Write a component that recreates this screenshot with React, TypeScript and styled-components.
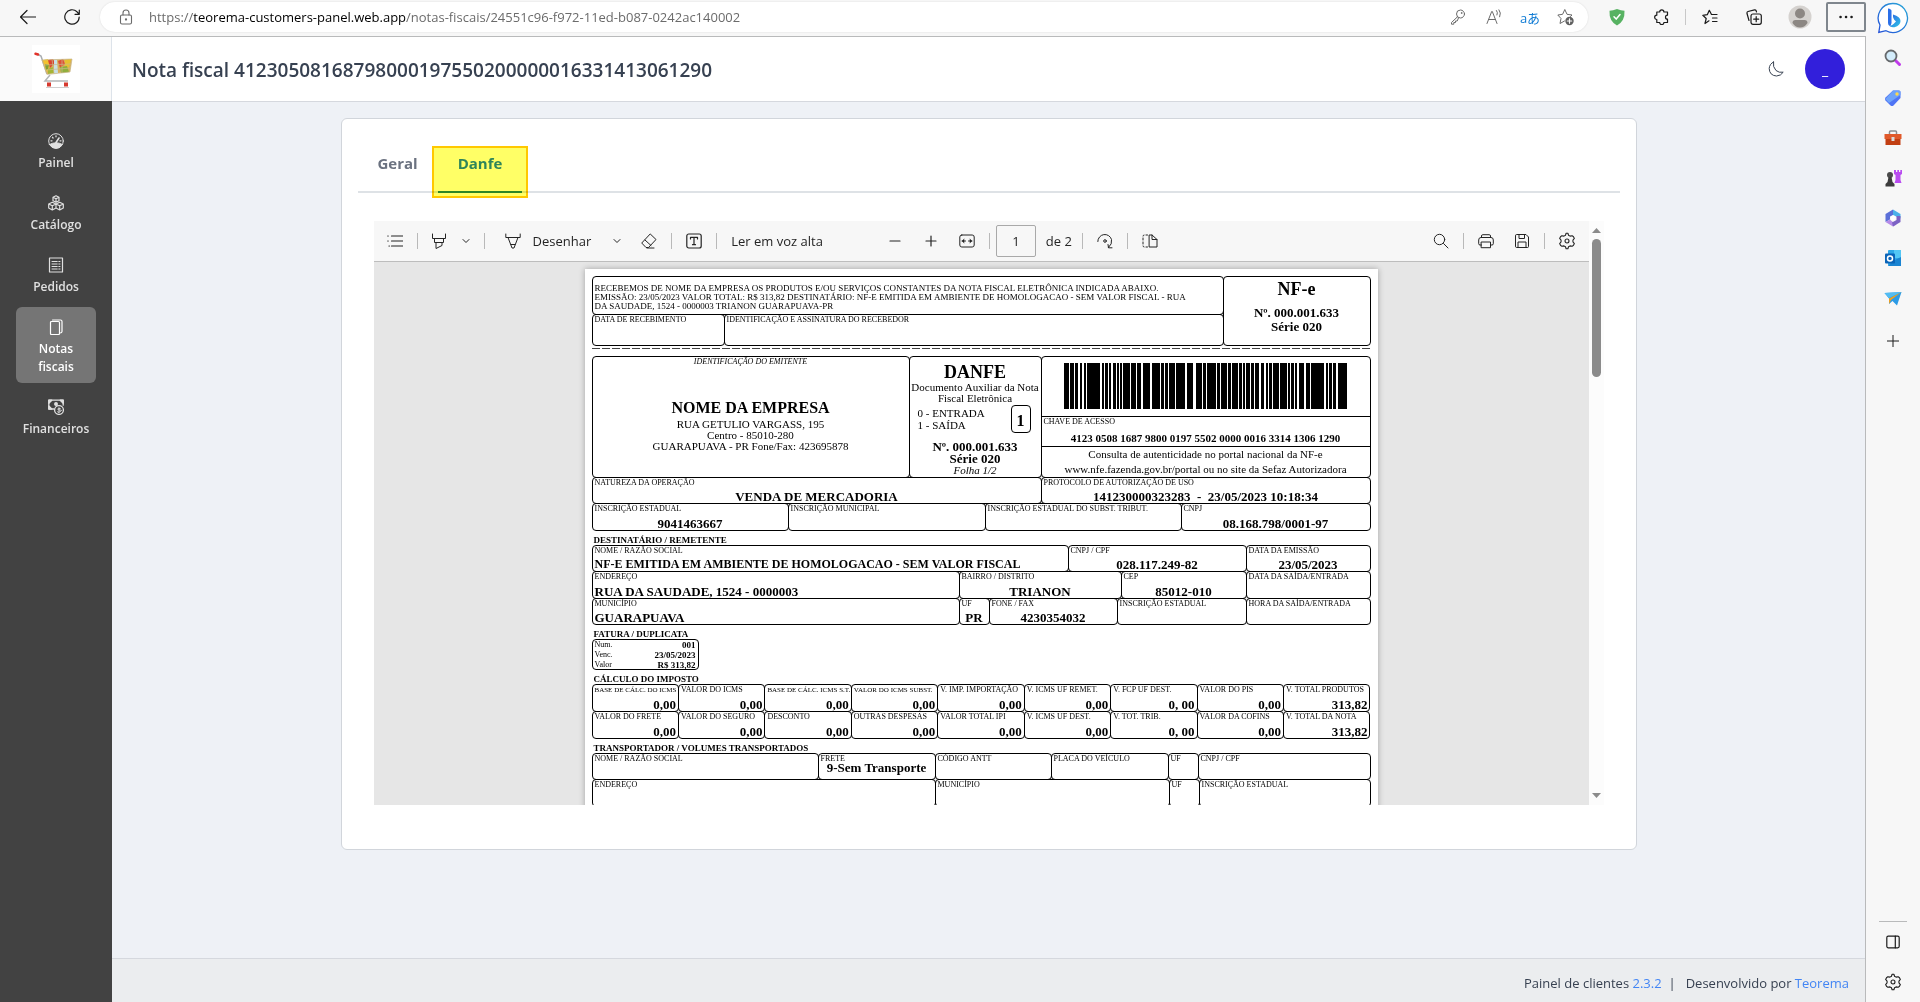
import React from 'react';
import styled, { createGlobalStyle, css } from 'styled-components';

const ui = `"Segoe UI", "Open Sans", "Noto Sans", sans-serif`;
const serif = `"Times New Roman", "Liberation Serif", serif`;

const GlobalStyle = createGlobalStyle`
  *, *::before, *::after { box-sizing: border-box; }
  body { margin: 0; font-family: ${ui}; color: #374151; }
  button { font: inherit; color: inherit; background: none; border: 0; padding: 0; cursor: pointer; }
  a { text-decoration: none; }
  svg { display: block; flex: none; }
`;

/* ---------- browser frame ---------- */

const Shell = styled.div`
  display: flex;
  height: 100vh;
  background: #f7f7f7;
`;

const Window = styled.div`
  flex: 1;
  min-width: 0;
  display: flex;
  flex-direction: column;
`;

const TopBar = styled.header`
  display: flex;
  align-items: center;
  gap: 4px;
  height: 36px;
  padding-left: 8px;
  padding-bottom: 2px;
  color: #1b1b1b;
`;

const BarButton = styled.button<{ $w?: number }>`
  display: flex;
  align-items: center;
  justify-content: center;
  width: ${(p) => p.$w ?? 40}px;
  height: 30px;
`;

const MenuButton = styled(BarButton)`
  border: 2px solid #7f868d;
  border-radius: 2px;
`;

const Address = styled.div`
  flex: 1;
  display: flex;
  align-items: center;
  height: 30px;
  margin: 0 5px 0 4px;
  padding: 0 4px 0 16px;
  border-radius: 15px;
  background: #fff;
  box-shadow: 0 0 2px rgba(0, 0, 0, 0.12);
  color: #6b6b6b;
`;

const Url = styled.span`
  flex: 1;
  margin-left: 13px;
  font-size: 13px;
  white-space: nowrap;
  b { font-weight: 400; color: #000; }
`;

const Translate = styled.span`
  font-family: "Open Sans", "Noto Sans CJK JP", sans-serif;
  font-size: 13px;
  color: #0f7bd4;
`;

const BarDivider = styled.span`
  width: 1px;
  height: 16px;
  background: #c8c8c8;
`;

const Viewport = styled.div`
  flex: 1;
  min-height: 0;
  display: flex;
  border-top: 1px solid #b9babb;
  border-right: 1px solid #b9babb;
`;

const EdgeRail = styled.aside`
  width: 54px;
  display: flex;
  flex-direction: column;
  align-items: center;
  color: #1b1b1b;
`;

const RailButton = styled.button<{ $h?: number }>`
  display: flex;
  align-items: center;
  justify-content: center;
  width: 40px;
  height: ${(p) => p.$h ?? 40}px;
`;

const BingButton = styled(RailButton)`
  margin-bottom: 2px;
`;

const RailSpace = styled.div`
  flex: 1;
  width: 28px;
  border-bottom: 1px solid #b9babb;
`;

/* ---------- application ---------- */

const SideNav = styled.nav`
  width: 112px;
  display: flex;
  flex-direction: column;
  background: #424242;
`;

const LogoBox = styled.div`
  display: flex;
  align-items: center;
  justify-content: center;
  height: 64px;
  background: #fafafa;
  border-right: 1px solid #dde3ea;
`;

const NavList = styled.ul`
  list-style: none;
  margin: 0;
  padding: 20px 16px;
  display: flex;
  flex-direction: column;
  gap: 4px;
`;

const NavItem = styled.a<{ $active?: boolean }>`
  display: flex;
  flex-direction: column;
  align-items: center;
  gap: 5px;
  padding: 12px 8px 7px;
  border-radius: 6px;
  font-size: 12px;
  font-weight: 600;
  line-height: 18px;
  text-align: center;
  color: #e0e0e0;
  ${(p) => p.$active && css`
    background: #757575;
    color: #fff;
  `}
`;

const Content = styled.div`
  flex: 1;
  min-width: 0;
  display: flex;
  flex-direction: column;
  background: #eef1f6;
`;

const Header = styled.div`
  display: flex;
  align-items: center;
  gap: 13px;
  height: 65px;
  padding: 0 20px;
  background: #fff;
  border-bottom: 1px solid #d5d8de;
`;

const Title = styled.h1`
  flex: 1;
  margin: 0;
  padding-top: 2px;
  font-size: 19px;
  line-height: 28px;
  font-weight: 600;
  color: #374151;
`;

const ThemeButton = styled.button`
  display: flex;
  align-items: center;
  justify-content: center;
  width: 32px;
  height: 32px;
`;

const Avatar = styled.button`
  width: 40px;
  height: 40px;
  border-radius: 50%;
  background: #321fdb;
  color: #fff;
  font-size: 14px;
`;

const Main = styled.main`
  flex: 1;
  min-height: 0;
  padding: 16px;
`;

const Card = styled.section`
  max-width: 1296px;
  margin: 0 auto;
  padding: 16px 16px 44px;
  background: #fff;
  border: 1px solid #d1d5db;
  border-radius: 6px;
`;

const Tabs = styled.div`
  display: flex;
  border-bottom: 2px solid #dee2e6;
`;

const Tab = styled.button<{ $active?: boolean }>`
  position: relative;
  padding: 16px 20px;
  margin-bottom: -2px;
  font-size: 15px;
  line-height: 24px;
  font-weight: 700;
  color: ${(p) => (p.$active ? '#2f855a' : '#6b7280')};
  border-bottom: 2px solid ${(p) => (p.$active ? '#2f855a' : 'transparent')};
`;

const TabText = styled.span`
  position: relative;
  z-index: 1;
`;

const Marker = styled.span`
  position: absolute;
  inset: 11px -6px -7px;
  border: 2px solid #ffc800;
  background: #ffff66;
  mix-blend-mode: multiply;
`;

const Footer = styled.footer`
  display: flex;
  align-items: center;
  justify-content: flex-end;
  height: 44px;
  padding: 4px 16px 0;
  border-top: 1px solid #d5d8de;
  background: #ebedef;
  font-size: 13px;
  white-space: pre;
  a { color: #4285f4; }
`;

/* ---------- pdf viewer ---------- */

const Viewer = styled.div`
  display: flex;
  height: 584px;
  margin: 28px 16px 0;
  overflow: hidden;
`;

const Reader = styled.div`
  flex: 1;
  min-width: 0;
  display: flex;
  flex-direction: column;
  background: #e6e6e6;
`;

const Toolbar = styled.div`
  display: flex;
  align-items: center;
  height: 41px;
  padding: 0 6px 0 5px;
  background: #f7f7f7;
  border-bottom: 1px solid #bdbdbd;
  color: #242424;
  font-size: 13px;
`;

const Group = styled.div<{ $left?: string }>`
  display: flex;
  align-items: center;
  gap: 4px;
  margin-left: ${(p) => p.$left ?? '0'};
`;

const Split = styled.div`
  display: flex;
  align-items: center;
`;

const Tool = styled.button<{ $w?: number }>`
  display: flex;
  align-items: center;
  justify-content: center;
  width: ${(p) => p.$w ?? 32}px;
  height: 32px;
`;

const TextTool = styled.button`
  display: flex;
  align-items: center;
  gap: 12px;
  height: 32px;
  padding: 0 14px;
  white-space: nowrap;
`;

const ReadTool = styled(TextTool)`
  padding: 0 8px;
`;

const Sep = styled.span`
  width: 1px;
  height: 16px;
  margin: 0 2px;
  background: #b9b9b9;
`;

const PageLabel = styled.label`
  display: flex;
  align-items: center;
  gap: 10px;
  padding-right: 4px;
  white-space: nowrap;
`;

const PageInput = styled.input`
  width: 40px;
  height: 32px;
  padding: 0;
  border: 1px solid #a9a9a9;
  border-radius: 2px;
  background: transparent;
  text-align: center;
  color: #242424;
  font: 13px ${ui};
`;

const Canvas = styled.div`
  flex: 1;
  min-height: 0;
  overflow: hidden;
  padding-top: 7px;
`;

const ScrollTrack = styled.div`
  width: 15px;
  display: flex;
  flex-direction: column;
  align-items: center;
  padding: 7px 0;
  background: #fcfcfc;
`;

const Thumb = styled.div`
  width: 9px;
  height: 138px;
  margin: 6px 0 auto;
  border-radius: 5px;
  background: #8b8b8b;
`;

/* ---------- danfe document ---------- */

const Sheet = styled.article`
  width: 793px;
  max-width: 100%;
  height: 1122px;
  margin: 0 auto;
  padding: 7px 8px 0 7px;
  background: #fff;
  box-shadow: 0 0 6px rgba(0, 0, 0, 0.3);
  font-family: ${serif};
  color: #000;
`;

const Row = styled.div<{ $cols: string; $h: number }>`
  display: grid;
  grid-template-columns: ${(p) => p.$cols};
  height: ${(p) => p.$h}px;
`;

const Stack = styled.div<{ $rows: string }>`
  display: grid;
  grid-template-rows: ${(p) => p.$rows};
`;

const Cell = styled.div`
  display: flex;
  flex-direction: column;
  justify-content: space-between;
  min-width: 0;
  margin: 0 -1px -1px 0;
  padding: 0 2px;
  border: 1px solid #000;
  border-radius: 4px;
  overflow: hidden;
  white-space: nowrap;
`;

const Label = styled.span<{ $small?: boolean }>`
  font-size: ${(p) => (p.$small ? 7 : 8)}px;
  line-height: ${(p) => (p.$small ? 11 : 9)}px;
`;

const Value = styled.span<{ $align?: string; $tight?: boolean; $size?: number }>`
  font-size: ${(p) => p.$size ?? 13}px;
  line-height: ${(p) => (p.$tight ? 10 : 13)}px;
  font-weight: 700;
  text-align: ${(p) => p.$align ?? 'center'};
  ${(p) => p.$tight && 'margin-bottom: auto;'}
`;

const Receipt = styled(Cell)`
  display: block;
  padding-top: 7px;
  font-size: 9px;
  line-height: 9px;
`;

const Center = styled(Cell)`
  justify-content: flex-start;
  align-items: center;
  text-align: center;
`;

const Line = styled.span<{ $size?: number; $lh?: number; $bold?: boolean; $italic?: boolean; $top?: number }>`
  font-size: ${(p) => p.$size ?? 11}px;
  line-height: ${(p) => p.$lh ?? 11}px;
  font-weight: ${(p) => (p.$bold ? 700 : 400)};
  font-style: ${(p) => (p.$italic ? 'italic' : 'normal')};
  margin-top: ${(p) => p.$top ?? 0}px;
`;

const InOut = styled.div`
  align-self: stretch;
  display: flex;
  justify-content: space-between;
  align-items: center;
  margin: 1px 8px 0 6px;
  font-size: 11px;
  line-height: 12px;
  text-align: left;
`;

const InOutBox = styled.strong`
  width: 20px;
  height: 28px;
  border: 1px solid #000;
  border-radius: 4px;
  font-size: 16px;
  line-height: 30px;
  text-align: center;
`;

const KeyPanel = styled(Cell)`
  justify-content: flex-start;
  padding: 0;
`;

const BarcodeBox = styled.div`
  display: flex;
  justify-content: center;
  height: 59px;
  padding: 6px 2px 0;
`;

const KeyBox = styled.div`
  display: flex;
  flex-direction: column;
  gap: 6px;
  height: 31px;
  padding: 0 2px;
  border: solid #000;
  border-width: 1px 0;
`;

const KeyNumber = styled.strong`
  font-size: 11px;
  line-height: 12px;
  text-align: center;
`;

const QueryBox = styled.div`
  font-size: 11px;
  line-height: 15px;
  text-align: center;
`;

const Cut = styled.div`
  height: 1px;
  margin: 3px 0 7px;
  background: repeating-linear-gradient(90deg, #444 0 8px, #fff 8px 10px);
`;

const Section = styled.h2`
  display: flex;
  align-items: flex-end;
  height: 15px;
  margin: 0;
  padding-left: 2px;
  font-size: 9px;
  line-height: 10px;
  font-weight: 700;
`;

const Invoice = styled.dl`
  display: grid;
  grid-template-columns: auto auto;
  justify-content: space-between;
  width: 107px;
  height: 31px;
  margin: 0 0 -1px;
  padding: 0 2px;
  border: 1px solid #000;
  border-radius: 4px;
  overflow: hidden;
  font-size: 8px;
  line-height: 10px;
  dd { margin: 0; font-size: 9px; font-weight: 700; text-align: right; }
`;

/* ---------- icons ---------- */

type IconProps = { size?: number; box?: number; sw?: number; children: React.ReactNode };
const Icon = ({ size = 16, box = 16, sw = 1, children }: IconProps) => (
  <svg width={size} height={size} viewBox={`0 0 ${box} ${box}`} fill="none" stroke="currentColor" strokeWidth={sw} strokeLinecap="round" strokeLinejoin="round" aria-hidden="true">
    {children}
  </svg>
);

const GearIcon = ({ size = 18 }: { size?: number }) => (
  <Icon size={size} box={20} sw={1.2}>
    <path d="M8.3 3.6 9 1.4h2l.7 2.2 1.7 1 2.3-.5 1.5 1.2 1 1.9-1.6 1.7v2.2l1.6 1.7-1 1.9-1.5 1.2-2.3-.5-1.7 1-.7 2.2H9l-.7-2.2-1.7-1-2.3.5-1.5-1.2-1-1.9 1.6-1.7V8.9L1.800 7.200l1-1.900 1.500-1.200 2.300.5z" />
    <circle cx="10" cy="10" r="2.2" />
  </Icon>
);

const Chevron = () => <Icon size={10} box={10}><path d="m2 3.500 3 3 3-3" /></Icon>;

const Cart = () => (
  <svg width="48" height="48" viewBox="0 0 48 48" aria-label="Logo" role="img">
    <rect width="48" height="48" fill="#fff" />
    <path d="M5 9 9 11 15 29" fill="none" stroke="#a9adb0" strokeWidth="1.500" />
    <path d="M3.500 8.800 6 9.500" stroke="#e2332b" strokeWidth="2.500" strokeLinecap="round" />
    <path d="M10 15 40 14 38 27 15 29z" fill="#d9b058" />
    <path d="m11 15 5-1 2 5-3 8-1-1z" fill="#f2c230" />
    <path d="m16 15 5-1 2 4-5 5z" fill="#d9452f" />
    <path d="m22 14 3 1 1 13-4 1z" fill="#c9dfe6" />
    <path d="m26 16 5-2 2 5-5 4z" fill="#df5038" />
    <path d="m33 15 6-1-2 8-4 2z" fill="#e8c12f" />
    <path d="m28 22 7-1 2 6-8 1z" fill="#8fae3c" />
    <path d="m16 24 5-2 1 6-6 1z" fill="#a4b534" />
    <path d="m13 19 4 1-1 4-2 1z" fill="#7f9f35" />
    <path d="M10 15 40 14 38 27 15 29.500 10 15M12 20l27-1M14 25l25-2M20 14l2 15M30 14v14" fill="none" stroke="#c9b98c" strokeWidth=".7" />
    <path d="M18 30 13 36h23" fill="none" stroke="#b3b6b8" strokeWidth="1.500" />
    <path d="M15 37.500h4v4h-4zM32 37.500h4v4h-4z" fill="#d63a2f" />
    <path d="M14 42.500h23" stroke="#cfcfcf" />
  </svg>
);

const Bing = () => (
  <svg width="32" height="32" viewBox="0 0 32 32" aria-hidden="true">
    <defs>
      <linearGradient id="bing-ring" x1="0" y1="1" x2="1" y2="0"><stop offset="0" stopColor="#2350d8" /><stop offset="1" stopColor="#2aa9d8" /></linearGradient>
      <linearGradient id="bing-b" x1="0" y1="0" x2="1" y2="1"><stop offset="0" stopColor="#2b5ee0" /><stop offset="1" stopColor="#2fc8e8" /></linearGradient>
    </defs>
    <path d="M16 1.500A14.500 14.500 0 1 1 9 28.700L1.800 30.300 3 23A14.500 14.500 0 0 1 16 1.500Z" fill="#fff" stroke="url(#bing-ring)" strokeWidth="1.300" />
    <path d="M11 6.500q3.500.5 3.500 2.500v12q-.5 2.500-1.500 3-2-.5-2-3z" fill="#2b6fe8" />
    <path d="M16 12.500q7.500 2 7.500 6.500t-6 6.200q-4 .6-5.500-1.700 2.500.5 4.500-1.500l2.500-2.500-2-2q-1.500-2.500-1-5Z" fill="url(#bing-b)" />
  </svg>
);

/* Bar edges of the access-key barcode, in thirds of a pixel. */
const bars = [
  [0, 15], [18, 30], [33, 42], [48, 54], [60, 66], [69, 108], [114, 120], [123, 132], [135, 141], [147, 156], [159, 165],
  [168, 174], [177, 198], [201, 216], [219, 231], [237, 258], [264, 288], [291, 300], [303, 312], [315, 333], [336, 363],
  [369, 387], [396, 414], [417, 426], [429, 456], [459, 468], [471, 489], [492, 501], [504, 522], [525, 534], [537, 543],
  [546, 558], [561, 570], [573, 585], [591, 600], [606, 612], [615, 624], [627, 645], [648, 669], [672, 678], [681, 690],
  [693, 699], [705, 720], [726, 738], [741, 780], [786, 792], [795, 804], [807, 816], [822, 849],
];

const Barcode = () => (
  <svg width="283" height="46" viewBox="0 0 849 138" role="img" aria-label="Código de barras" shapeRendering="crispEdges">
    {bars.map(([a, b]) => <rect key={a} x={a} width={b - a} height="138" />)}
  </svg>
);

/* ---------- data ---------- */

const nav = [
  { label: 'Painel', icon: (
    <Icon><circle cx="8" cy="8" r="7.300" /><path d="M1.500 11.500Q8 8 14.500 11.500 12.500 15.200 8 15.300 3.500 15.200 1.500 11.500Z" fill="currentColor" /><path d="M8 9.500 11 5" strokeWidth="1.600" /><path d="M8 2.800v1M4.500 4.300l.6.700M3 7.800h1M12 7.800h1" strokeWidth="1.300" /></Icon>
  ) },
  { label: 'Catálogo', icon: (
    <Icon sw={1.200}><path d="m8 .8 3 1.500v3.500L8 7.300 5 5.800V2.300zM5 2.300l3 1.500 3-1.500M8 3.800v3.500M4.300 7.300l3.700 1.700v4L4.300 15 .7 13V9zM.7 9l3.600 1.700L8 9M4.300 10.700V15M11.700 7.300 15.300 9v4l-3.600 2L8 13V9zM8 9l3.700 1.700L15.300 9M11.700 10.700V15" /></Icon>
  ) },
  { label: 'Pedidos', icon: (
    <Icon sw={1.200}><path d="M1.500 1h13v14h-13z" /><path d="M4 4.500h8M4 7h8M4 9.500h8M4 12h8" strokeWidth="1" /><path d="M10 4v8.500" stroke="#424242" strokeWidth=".8" /></Icon>
  ) },
  { label: 'Notas fiscais', active: true, icon: (
    <Icon sw={1.200}><path d="M2.500 3.500q0-1 1-1h7q1 0 1 1v11q0 1-1 1h-7q-1 0-1-1zM4.500 1h8q1.500 0 1.500 1.500v10q0 1.500-2 1.500" /></Icon>
  ) },
  { label: 'Financeiros', icon: (
    <Icon sw={1.300}><path d="M6 10H.8V1.200h14.400v5" /><path d="M.8 1.200h3L.8 4.200zM15.200 1.200h-3l3 3zM.8 10V7l3 3z" fill="currentColor" /><circle cx="8" cy="5" r="1.300" fill="currentColor" /><circle cx="11" cy="11" r="4.400" /><path d="M12.300 9.500q-2.600-.8-2.600.5t2.600 1.100-.2 1.600-2.400-.1M11 8.800v4.400" strokeWidth=".9" /></Icon>
  ) },
];

const taxes = [
  [
    ['BASE DE CÁLC. DO ICMS', '0,00', true], ['VALOR DO ICMS', '0,00'], ['BASE DE CÁLC. ICMS S.T.', '0,00', true],
    ['VALOR DO ICMS SUBST.', '0,00', true], ['V. IMP. IMPORTAÇÃO', '0,00'], ['V. ICMS UF REMET.', '0,00'],
    ['V. FCP UF DEST.', '0, 00'], ['VALOR DO PIS', '0,00'], ['V. TOTAL PRODUTOS', '313,82'],
  ],
  [
    ['VALOR DO FRETE', '0,00'], ['VALOR DO SEGURO', '0,00'], ['DESCONTO', '0,00'], ['OUTRAS DESPESAS', '0,00'],
    ['VALOR TOTAL IPI', '0,00'], ['V. ICMS UF DEST.', '0,00'], ['V. TOT. TRIB.', '0, 00'], ['VALOR DA COFINS', '0,00'],
    ['V. TOTAL DA NOTA', '313,82'],
  ],
] as [string, string, boolean?][][];

type FieldProps = { label: string; value?: string; align?: string; small?: boolean; tight?: boolean; size?: number };
const Field = ({ label, value, align, small, tight, size }: FieldProps) => (
  <Cell>
    <Label $small={small}>{label}</Label>
    {value && <Value $align={align} $tight={tight} $size={size}>{value}</Value>}
  </Cell>
);

const Danfe = () => (
  <Sheet>
    <Row $cols="631fr 147fr" $h={69}>
      <Stack $rows="38px 31px">
        <Receipt>
          RECEBEMOS DE NOME DA EMPRESA OS PRODUTOS E/OU SERVIÇOS CONSTANTES DA NOTA FISCAL ELETRÔNICA INDICADA ABAIXO.<br />
          EMISSÃO: 23/05/2023 VALOR TOTAL: R$ 313,82 DESTINATÁRIO: NF-E EMITIDA EM AMBIENTE DE HOMOLOGACAO - SEM VALOR FISCAL - RUA<br />
          DA SAUDADE, 1524 - 0000003 TRIANON GUARAPUAVA-PR
        </Receipt>
        <Row $cols="132fr 499fr" $h={31}>
          <Field label="DATA DE RECEBIMENTO" />
          <Field label="IDENTIFICAÇÃO E ASSINATURA DO RECEBEDOR" />
        </Row>
      </Stack>
      <Center>
        <Line $size={18} $lh={20} $bold $top={2}>NF-e</Line>
        <Line $size={13} $lh={14} $bold $top={7}>Nº. 000.001.633</Line>
        <Line $size={13} $lh={14} $bold>Série 020</Line>
      </Center>
    </Row>
    <Cut />
    <Row $cols="317fr 132fr 329fr" $h={121}>
      <Center>
        <Line $size={8} $lh={9} $italic>IDENTIFICAÇÃO DO EMITENTE</Line>
        <Line $size={16} $lh={18} $bold $top={33}>NOME DA EMPRESA</Line>
        <Line $top={2}>RUA GETULIO VARGASS, 195</Line>
        <Line>Centro - 85010-280</Line>
        <Line>GUARAPUAVA - PR Fone/Fax: 423695878</Line>
      </Center>
      <Center>
        <Line $size={18} $lh={20} $bold $top={5}>DANFE</Line>
        <Line>Documento Auxiliar da Nota</Line>
        <Line>Fiscal Eletrônica</Line>
        <InOut>
          <span>0 - ENTRADA<br />1 - SAÍDA</span>
          <InOutBox>1</InOutBox>
        </InOut>
        <Line $size={13} $lh={12} $bold $top={8}>Nº. 000.001.633</Line>
        <Line $size={13} $lh={12} $bold>Série 020</Line>
        <Line $italic>Folha 1/2</Line>
      </Center>
      <KeyPanel>
        <BarcodeBox><Barcode /></BarcodeBox>
        <KeyBox>
          <Label>CHAVE DE ACESSO</Label>
          <KeyNumber>4123 0508 1687 9800 0197 5502 0000 0016 3314 1306 1290</KeyNumber>
        </KeyBox>
        <QueryBox>
          Consulta de autenticidade no portal nacional da NF-e<br />
          www.nfe.fazenda.gov.br/portal ou no site da Sefaz Autorizadora
        </QueryBox>
      </KeyPanel>
    </Row>
    <Row $cols="449fr 329fr" $h={26}>
      <Field label="NATUREZA DA OPERAÇÃO" value="VENDA DE MERCADORIA" />
      <Field label="PROTOCOLO DE AUTORIZAÇÃO DE USO" value={'141230000323283\u00a0 -\u00a0 23/05/2023 10:18:34'} />
    </Row>
    <Row $cols="196fr 197fr 196fr 189fr" $h={27}>
      <Field label="INSCRIÇÃO ESTADUAL" value="9041463667" />
      <Field label="INSCRIÇÃO MUNICIPAL" />
      <Field label="INSCRIÇÃO ESTADUAL DO SUBST. TRIBUT." />
      <Field label="CNPJ" value="08.168.798/0001-97" />
    </Row>

    <Section>DESTINATÁRIO / REMETENTE</Section>
    <Row $cols="476fr 178fr 124fr" $h={26}>
      <Field label="NOME / RAZÃO SOCIAL" value="NF-E EMITIDA EM AMBIENTE DE HOMOLOGACAO - SEM VALOR FISCAL" align="left" size={12} />
      <Field label="CNPJ / CPF" value="028.117.249-82" />
      <Field label="DATA DA EMISSÃO" value="23/05/2023" />
    </Row>
    <Row $cols="367fr 162fr 125fr 124fr" $h={27}>
      <Field label="ENDEREÇO" value="RUA DA SAUDADE, 1524 - 0000003" align="left" />
      <Field label="BAIRRO / DISTRITO" value="TRIANON" />
      <Field label="CEP" value="85012-010" />
      <Field label="DATA DA SAÍDA/ENTRADA" />
    </Row>
    <Row $cols="367fr 30fr 128fr 129fr 124fr" $h={26}>
      <Field label="MUNICÍPIO" value="GUARAPUAVA" align="left" />
      <Field label="UF" value="PR" />
      <Field label="FONE / FAX" value="4230354032" />
      <Field label="INSCRIÇÃO ESTADUAL" />
      <Field label="HORA DA SAÍDA/ENTRADA" />
    </Row>

    <Section>FATURA / DUPLICATA</Section>
    <Invoice>
      <dt>Num.</dt><dd>001</dd>
      <dt>Venc.</dt><dd>23/05/2023</dd>
      <dt>Valor</dt><dd>R$ 313,82</dd>
    </Invoice>

    <Section>CÁLCULO DO IMPOSTO</Section>
    {taxes.map((line, i) => (
      <Row key={i} $cols="repeat(9, minmax(0, 1fr))" $h={27}>
        {line.map(([label, value, small]) => <Field key={label} label={label} value={value} small={small} align="right" />)}
      </Row>
    ))}

    <Section>TRANSPORTADOR / VOLUMES TRANSPORTADOS</Section>
    <Row $cols="226fr 117fr 116fr 117fr 30fr 172fr" $h={26}>
      <Field label="NOME / RAZÃO SOCIAL" />
      <Field label="FRETE" value="9-Sem Transporte" tight />
      <Field label="CÓDIGO ANTT" />
      <Field label="PLACA DO VEÍCULO" />
      <Field label="UF" />
      <Field label="CNPJ / CPF" />
    </Row>
    <Row $cols="343fr 234fr 30fr 171fr" $h={27}>
      <Field label="ENDEREÇO" />
      <Field label="MUNICÍPIO" />
      <Field label="UF" />
      <Field label="INSCRIÇÃO ESTADUAL" />
    </Row>
  </Sheet>
);

const PdfToolbar = () => (
  <Toolbar>
    <Group>
      <Tool aria-label="Sumário"><Icon sw={1.200}><path d="M4.500 3h11M4.500 8h11M4.500 13h11M.8 3h.4M.8 8h.4M2 13h.4" /></Icon></Tool>
      <Sep />
      <Split>
        <Tool $w={30} aria-label="Realçar"><Icon><path d="M1.500 1v4.500h13V1M3.500 5.500v4h9v-4M5 9.500v6l6-3v-3" /></Icon></Tool>
        <Tool $w={24} aria-label="Opções de realce"><Chevron /></Tool>
      </Split>
      <Sep />
      <Split>
        <TextTool><Icon><path d="M.8 1v3.500h14.400V1M3 4.500l4 10.500h2l4-10.500M6 11.500h4" /></Icon>Desenhar</TextTool>
        <Tool $w={24} aria-label="Opções de desenho"><Chevron /></Tool>
      </Split>
      <Tool aria-label="Borracha"><Icon><path d="M9.500 1.200 15 6.500l-7.500 8H5L1 10.300zM4 7l6 5.500M6 15h7" /></Icon></Tool>
      <Sep />
      <Tool aria-label="Adicionar texto"><Icon sw={1.200}><rect x=".8" y="1" width="14.400" height="14" rx="2" /><path d="M4.500 6V4.300h7V6M8 4.300v7.400M6.500 11.700h3" /></Icon></Tool>
      <Sep />
      <ReadTool>Ler em voz alta</ReadTool>
    </Group>
    <Group $left="48px">
      <Tool aria-label="Reduzir"><Icon size={12} box={12} sw={1.200}><path d="M1 6h10" /></Icon></Tool>
      <Tool aria-label="Ampliar"><Icon size={12} box={12} sw={1.200}><path d="M1 6h10M6 1v10" /></Icon></Tool>
      <Tool aria-label="Ajustar à largura"><Icon><rect x=".8" y="2" width="14.400" height="12" rx="2" /><path d="M3 8h3.500M9.500 8H13" /><path d="M5 6 3 8l2 2zM11 6l2 2-2 2z" fill="currentColor" strokeWidth=".3" /></Icon></Tool>
      <Sep />
      <PageLabel><PageInput defaultValue="1" aria-label="Página" />de 2</PageLabel>
      <Sep />
      <Tool aria-label="Girar"><Icon><path d="M.8 8.500A7 7 0 0 1 14.500 6.500q1 4.500-3 8M11 11.500l.5 3.300h3.500" /><circle cx="8" cy="8" r="1.300" /></Icon></Tool>
      <Sep />
      <Tool aria-label="Exibição de página"><Icon><path d="M7.500 2H10l5 4.500V14H7.500zM10 2v4.500h5M5.500 2H4M2 2Q1 2 1 3M1 5v2M1 9v2M1 13q0 1 1 1M4 14h1.500" /></Icon></Tool>
    </Group>
    <Group $left="auto">
      <Tool aria-label="Localizar"><Icon><circle cx="6.500" cy="6.500" r="5.200" /><path d="m10.500 10.500 4.500 4.500" /></Icon></Tool>
      <Sep />
      <Tool aria-label="Imprimir"><Icon><path d="M3.500 12H2q-1.300 0-1.300-1.300V7Q.7 4.500 3 4.500h10q2.300 0 2.300 2.500v3.700Q15.300 12 14 12h-1.500M3.500 4.500V3q0-1.300 1.300-1.300h6.400q1.300 0 1.300 1.300v1.500M3.500 9h9v5.700h-9z" /></Icon></Tool>
      <Tool aria-label="Salvar"><Icon><path d="M1.500 2.500q0-1 1-1H12l2.500 2.500v9.500q0 1-1 1h-11q-1 0-1-1zM4 14.500V9h8v5.500M5 1.500v4h5.500v-4" /></Icon></Tool>
      <Sep />
      <Tool aria-label="Configurações"><GearIcon /></Tool>
    </Group>
  </Toolbar>
);

const rail = [
  { label: 'Pesquisar', art: <><path d="m11 11 4.500 4.500" stroke="#c03bea" strokeWidth="3" /><circle cx="7" cy="7" r="5.500" fill="#d3ecfb" stroke="#66696c" strokeWidth="1.800" /></> },
  { label: 'Compras', art: <><path d="M9 1.500h6q1.500 0 1.500 1.500v6L9.500 16.500q-1.500 1-3 0L1.500 11.500q-1-1.500 0-3z" fill="#4f74f5" stroke="none" /><path d="M9 1.500h6q1.500 0 1.500 1.500v3L5 14 1.500 10z" fill="#6ea3fa" stroke="none" /><circle cx="13" cy="5" r="1.700" fill="#ffd84d" stroke="none" /></> },
  { label: 'Ferramentas', art: <><path d="M5.500 5V3q0-1 1-1h5q1 0 1 1v2" stroke="#8a8d8f" strokeWidth="1.500" /><path d="M.5 5h17v5H.5z" fill="#e0592a" stroke="none" /><path d="M1.500 10h15v6h-15z" fill="#c23f12" stroke="none" /><rect x="7.500" y="8" width="3" height="4" fill="#d9d9d9" stroke="none" /></> },
  { label: 'Jogos', art: <><path d="M10 1h2v2h1.300V1h1.700v2h1.300V1H18v4l-1.500 1v5l1 3h-7l1-3V6L10 5z" fill="#b94cf0" stroke="none" /><circle cx="6" cy="6" r="3" fill="#4a4a4a" stroke="none" /><path d="M4.500 8h3l1 5 2 2v2.500h-9V15l2-2z" fill="#3c3c3c" stroke="none" /></> },
  { label: 'Microsoft 365', art: <><path d="M9 .5 16.500 5v4.500L9 6z" fill="#4bb1ea" stroke="none" /><path d="M9 .5 1.500 5v8L6 10.500V7.500L9 6z" fill="#5b6fd8" stroke="none" /><path d="M1.500 13 9 17.500l3.500-2-5-3.500L6 10.500z" fill="#b58be8" stroke="none" /><path d="M9 17.500 16.500 13V7L12.500 7v4L8 13.500z" fill="#7c62c4" stroke="none" /><circle cx="9.200" cy="9" r="2.500" fill="#fff" stroke="none" /></> },
  { label: 'Outlook', art: <><rect x="4" y="1" width="13" height="16" rx="1" fill="#2fa8e8" stroke="none" /><path d="M10 1h7v8h-7z" fill="#53c7f5" stroke="none" /><path d="m9 12 8-4v9H4z" fill="#1a84d2" stroke="none" /><rect x="1" y="4.500" width="10" height="10" rx="1" fill="#0a64b8" stroke="none" /><circle cx="6" cy="9.500" r="2.500" stroke="#fff" strokeWidth="1.500" /></> },
  { label: 'Enviar', art: <><path d="M.5 4 17.500 3 13 16.500 8.500 12 5 15V9.500z" fill="#2c9be6" stroke="none" /><path d="M17.500 3 5 9.500V15l2-4z" fill="#f0a01e" stroke="none" /><path d="M.5 4 17.500 3 5 9z" fill="#53bdf2" stroke="none" /></> },
];

export default function App() {
  return (
    <>
      <GlobalStyle />
      <Shell>
        <Window>
          <TopBar>
            <BarButton aria-label="Voltar"><Icon sw={1.200}><path d="M.5 8h15M7 1.500.5 8 7 14.500" /></Icon></BarButton>
            <BarButton aria-label="Atualizar"><Icon sw={1.200}><path d="M15.200 8A7.200 7.200 0 1 1 13 2.800L15 5M15.300 1v4.300H11" /></Icon></BarButton>
            <Address>
              <Icon size={20} box={20} sw={1.100}><rect x="4.500" y="8" width="11" height="9" rx="1.500" /><path d="M7 8V6q0-3 3-3t3 3v2" /><circle cx="10" cy="12.500" r=".6" fill="currentColor" /></Icon>
              <Url>https://<b>teorema-customers-panel.web.app</b>/notas-fiscais/24551c96-f972-11ed-b087-0242ac140002</Url>
              <BarButton $w={36} aria-label="Senhas"><Icon><circle cx="10.500" cy="5" r="4" /><path d="M7.500 7.800 1.500 13.500v1.700h2.300v-1.700h1.700V12h1.700l1.300-3" /><circle cx="11.500" cy="4" r=".4" /></Icon></BarButton>
              <BarButton $w={36} aria-label="Ler em voz alta"><Icon><path d="M1 14.500 5.700 2.500h.6L11 14.500M2.600 10.500h6.800M10.500 1.500q1.700 2 .5 4.500M13 .8q2.500 3 .7 7" /></Icon></BarButton>
              <BarButton $w={36} aria-label="Traduzir"><Translate>aあ</Translate></BarButton>
              <BarButton $w={36} aria-label="Adicionar aos favoritos"><Icon size={18} box={18}><path d="m7.500 13-4.500 2.500 1-5L.8 7l4.800-.7L7.800 1.500 10 6.300l5 .7-1.500 1.500" /><circle cx="12.500" cy="13" r="4.200" fill="#5f5f5f" stroke="none" /><path d="M12.500 10.800v4.400M10.300 13h4.400" stroke="#fff" strokeWidth="1.200" /></Icon></BarButton>
            </Address>
            <BarButton aria-label="Proteção"><Icon size={18} box={18}><path d="M9 1q4 1.800 7.500 1.800.6 10.400-7.500 14.700Q.9 13.200 1.500 2.800 5 2.800 9 1Z" fill="#57b262" stroke="none" /><path d="m6 8.800 2.200 2.300L12 6.500" stroke="#fff" strokeWidth="1.500" /></Icon></BarButton>
            <BarButton aria-label="Extensões"><Icon sw={1.200}><path d="M4.500 3h2.200a2.100 2.100 0 0 1 4.200 0h3.600v3.200a2 2 0 0 0 0 4v3.300h-3.600a2.100 2.100 0 0 1-4.200 0H3.800v-3a2.100 2.100 0 0 1 0-4.300V3z" /></Icon></BarButton>
            <BarDivider />
            <BarButton aria-label="Favoritos"><Icon sw={1.200}><path d="m7 11.800-4 2.700 1.200-5L.8 6.300l4.500-.6L7.300 1.300 9.500 5.500H15M10.500 9H15M10.500 12.500H15" /></Icon></BarButton>
            <BarButton aria-label="Coleções"><Icon sw={1.200}><rect x="5" y="5" width="10.300" height="10.300" rx="2" /><path d="M10.200 7.700v5M7.700 10.200h5M3 11.500 1 4.500Q.7 3 2 2.500L8.500.8q1.200-.2 1.700 1L10.500 3" /></Icon></BarButton>
            <BarButton $w={44} aria-label="Perfil">
              <svg width="24" height="24" viewBox="0 0 24 24" aria-hidden="true"><circle cx="12" cy="12" r="11.500" fill="#d5d2cf" /><circle cx="12" cy="8.500" r="5" fill="#8c8783" /><path d="M4.500 18q0-3 3-3h9q3 0 3 3-3 4.500-7.500 4.500T4.500 18Z" fill="#8c8783" /></svg>
            </BarButton>
            <MenuButton aria-label="Menu"><Icon><path d="M2.500 8h.1M8 8h.1M13.500 8h.1" strokeWidth="2.500" /></Icon></MenuButton>
          </TopBar>
          <Viewport>
            <SideNav>
              <LogoBox><Cart /></LogoBox>
              <NavList>
                {nav.map((n) => (
                  <li key={n.label}><NavItem href="#" $active={n.active}>{n.icon}<span>{n.label}</span></NavItem></li>
                ))}
              </NavList>
            </SideNav>
            <Content>
              <Header>
                <Title>Nota fiscal 41230508168798000197550200000016331413061290</Title>
                <ThemeButton aria-label="Tema escuro"><Icon><path d="M5.500 1Q1.500 3 1.200 7.500 1.500 14.500 8.500 15 13 14.800 15.200 11.200 11 12 8 9.500 4.500 6 5.500 1Z" /></Icon></ThemeButton>
                <Avatar>_</Avatar>
              </Header>
              <Main>
                <Card>
                  <Tabs role="tablist">
                    <Tab role="tab"><TabText>Geral</TabText></Tab>
                    <Tab role="tab" aria-selected $active><TabText>Danfe</TabText><Marker /></Tab>
                  </Tabs>
                  <Viewer>
                    <Reader>
                      <PdfToolbar />
                      <Canvas><Danfe /></Canvas>
                    </Reader>
                    <ScrollTrack>
                      <svg width="9" height="5" viewBox="0 0 9 5"><path d="M4.500 0 9 5H0z" fill="#8b8b8b" /></svg>
                      <Thumb />
                      <svg width="9" height="5" viewBox="0 0 9 5"><path d="M4.500 5 9 0H0z" fill="#8b8b8b" /></svg>
                    </ScrollTrack>
                  </Viewer>
                </Card>
              </Main>
              <Footer>Painel de clientes <a href="#">2.3.2</a>{'  |   '}Desenvolvido por <a href="#">Teorema</a></Footer>
            </Content>
          </Viewport>
        </Window>
        <EdgeRail>
          <BingButton $h={36} aria-label="Bing"><Bing /></BingButton>
          {rail.map((r) => (
            <RailButton key={r.label} aria-label={r.label}><Icon size={18} box={18}>{r.art}</Icon></RailButton>
          ))}
          <RailButton $h={46} aria-label="Adicionar"><Icon size={12} box={12}><path d="M0 6h12M6 0v12" /></Icon></RailButton>
          <RailSpace />
          <RailButton aria-label="Painel lateral"><Icon size={14} box={14} sw={1.200}><rect x=".8" y="1.200" width="12.400" height="11.600" rx="1.500" /><path d="M9.300 1.200v11.600" /></Icon></RailButton>
          <RailButton aria-label="Configurações"><GearIcon /></RailButton>
        </EdgeRail>
      </Shell>
    </>
  );
}
